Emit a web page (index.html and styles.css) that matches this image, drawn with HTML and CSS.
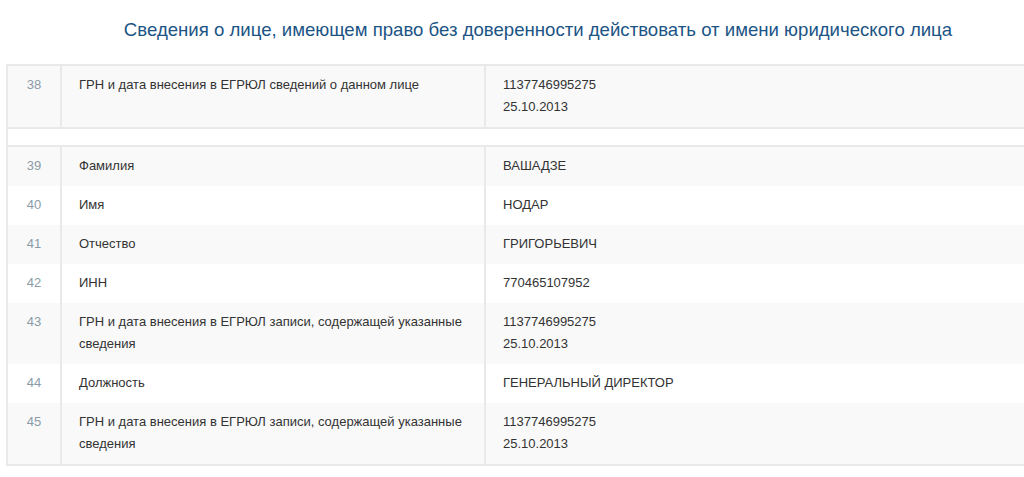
FILE: index.html
```html
<!DOCTYPE html>
<html lang="ru">
<head>
<meta charset="utf-8">
<link rel="stylesheet" href="styles.css">
</head>
<body>
<div class="wrap">
  <h2 class="title">Сведения о лице, имеющем право без доверенности действовать от имени юридического лица</h2>
  <table class="info">
    <colgroup><col class="c-num"><col class="c-name"><col class="c-val"></colgroup>
    <tbody>
      <tr class="row gray sep-bottom">
        <td class="num">38</td>
        <td>ГРН и дата внесения в ЕГРЮЛ сведений о данном лице</td>
        <td>1137746995275<br>25.10.2013</td>
      </tr>
      <tr class="spacer"><td colspan="3"></td></tr>
      <tr class="row gray">
        <td class="num">39</td><td>Фамилия</td><td>ВАШАДЗЕ</td>
      </tr>
      <tr class="row">
        <td class="num">40</td><td>Имя</td><td>НОДАР</td>
      </tr>
      <tr class="row gray">
        <td class="num">41</td><td>Отчество</td><td>ГРИГОРЬЕВИЧ</td>
      </tr>
      <tr class="row">
        <td class="num">42</td><td>ИНН</td><td>770465107952</td>
      </tr>
      <tr class="row gray">
        <td class="num">43</td><td>ГРН и дата внесения в ЕГРЮЛ записи, содержащей указанные сведения</td><td>1137746995275<br>25.10.2013</td>
      </tr>
      <tr class="row">
        <td class="num">44</td><td>Должность</td><td>ГЕНЕРАЛЬНЫЙ ДИРЕКТОР</td>
      </tr>
      <tr class="row gray">
        <td class="num">45</td><td>ГРН и дата внесения в ЕГРЮЛ записи, содержащей указанные сведения</td><td>1137746995275<br>25.10.2013</td>
      </tr>
    </tbody>
  </table>
</div>
</body>
</html>
```
FILE: styles.css
```css
html, body {
  margin: 0;
  padding: 0;
  background: #fff;
  overflow: hidden;
}
body {
  font-family: "Liberation Sans", Arial, sans-serif;
  font-size: 13px;
  color: #333;
}
.wrap {
  margin-left: 6px;
  width: 1064px;
}
.title {
  margin: 0;
  padding: 18px 0 22px;
  font-size: 18.6px;
  line-height: 24px;
  font-weight: normal;
  text-align: center;
  color: #1b5485;
}
.info {
  width: 100%;
  table-layout: fixed;
  border-collapse: collapse;
  border: 2px solid #e9e9e9;
}
.c-num { width: 54px; }
.c-name { width: 424px; }
.info td {
  padding: 8px 17px 9px;
  line-height: 22px;
  vertical-align: top;
  border-left: 2px solid #e9e9e9;
}
.info td:first-child { border-left: 0; }
.info td.num {
  text-align: center;
  color: #8b9ba7;
  padding-left: 0;
  padding-right: 0;
}
.row.gray td { background: #f9f9f9; }
.sep-bottom td { border-bottom: 2px solid #e9e9e9; }
.spacer td {
  padding: 0;
  height: 16px;
  border-bottom: 2px solid #e9e9e9;
  background: #fff;
}
```
